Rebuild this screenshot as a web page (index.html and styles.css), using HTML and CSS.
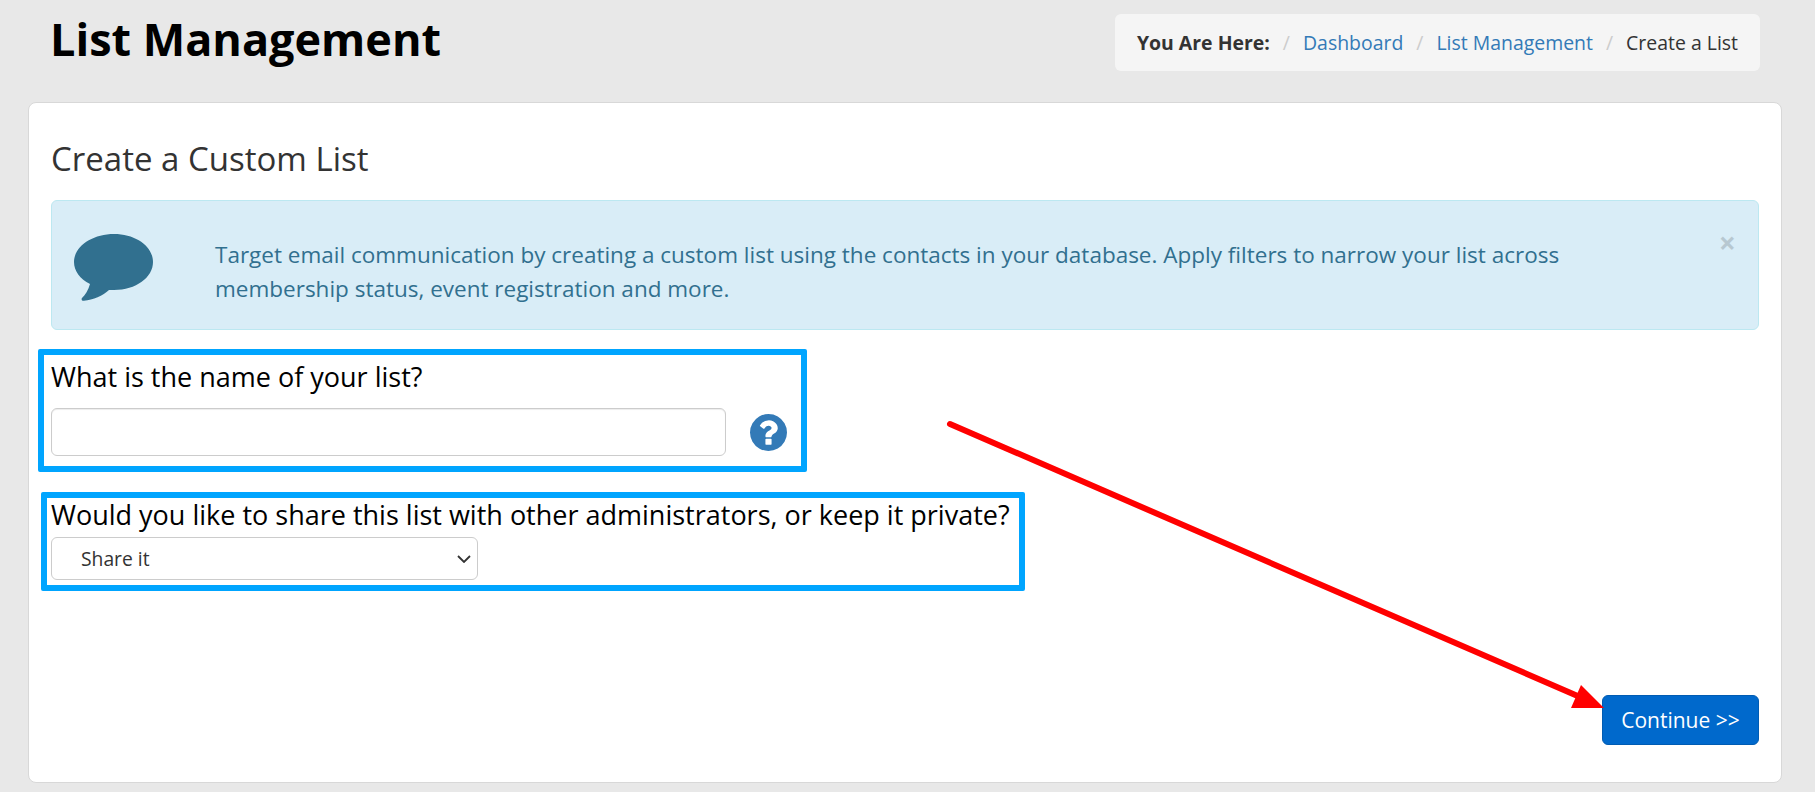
FILE: index.html
```html
<!DOCTYPE html>
<html lang="en">
<head>
    <meta charset="UTF-8">
    <title>List Management</title>
    <link rel="stylesheet" href="styles.css">
</head>
<body>
    <div class="page-head">
        <h1>List Management</h1>
        <ol class="breadcrumb">
            <li class="crumb-label">You Are Here:</li>
            <li><a href="#">Dashboard</a></li>
            <li><a href="#">List Management</a></li>
            <li>Create a List</li>
        </ol>
    </div>

    <div class="card">
        <h2>Create a Custom List</h2>

        <div class="alert">
            <svg class="alert-icon" viewBox="0 0 79 67" aria-hidden="true">
                <path d="M40 0C18 0 0 12.500 0 28c0 9 6 17 16 22-1.500 6-5 11-8 14-1 1.500 0 3 2 2.800 9-1 19-5 25-10.800 1.700.1 3.300 0 5 0 22 0 39-12.500 39-28S62 0 40 0z"/>
            </svg>
            <p>Target email communication by creating a custom list using the contacts in your database. Apply filters to narrow your list across membership status, event registration and more.</p>
            <span class="alert-close">×</span>
        </div>

        <div class="form-group name-group">
            <label for="listName">What is the name of your list?</label>
            <div class="input-row">
                <input type="text" id="listName">
                <svg class="help-icon" viewBox="128 128 1536 1536" aria-hidden="true">
                    <path d="M1024 1376v-192q0-14-9-23t-23-9h-192q-14 0-23 9t-9 23v192q0 14 9 23t23 9h192q14 0 23-9t9-23zm256-672q0-88-55.500-163t-138.500-116-170-41q-243 0-371 213-15 24 8 42l132 100q7 6 19 6 16 0 25-12 53-68 86-92 34-24 86-24 48 0 85.500 26t37.500 59q0 38-20 61t-68 45q-63 28-115.500 86.500t-52.500 125.500v36q0 14 9 23t23 9h192q14 0 23-9t9-23q0-19 21.500-49.500t54.500-49.500q32-18 49-28.500t46-35 44.500-48 28-60.500 12.500-81zm384 192q0 209-103 385.500t-279.500 279.500-385.500 103-385.500-103-279.500-279.500-103-385.500 103-385.500 279.500-279.500 385.500-103 385.500 103 279.500 279.500 103 385.500z"/>
                </svg>
            </div>
        </div>

        <div class="form-group share-group">
            <label for="listShare">Would you like to share this list with other administrators, or keep it private?</label>
            <select id="listShare">
                <option>Share it</option>
                <option>Keep it private</option>
            </select>
        </div>

        <div class="form-actions">
            <button type="button">Continue &gt;&gt;</button>
        </div>
    </div>

    <!-- annotations drawn on top of the screenshot -->
    <div class="mark mark-name"></div>
    <div class="mark mark-share"></div>
    <svg class="arrow" viewBox="0 0 1815 792" aria-hidden="true">
        <line x1="950" y1="424" x2="1580" y2="697" />
        <polygon points="1581,685 1571,708 1604,708" />
    </svg>
</body>
</html>
```

FILE: styles.css
```css
body {
    margin: 0;
    height: 792px;
    overflow: hidden;
    position: relative;
    background: #e8e8e8;
    font-family: "Open Sans", "Noto Sans", sans-serif;
    color: #333;
}

.page-head {
    display: flex;
    justify-content: space-between;
    align-items: flex-start;
    padding: 14px 55px 0 50px;
    height: 88px;
    box-sizing: border-box;
}

h1 {
    margin: 0;
    font-size: 45px;
    line-height: 50px;
    font-weight: 700;
    color: #000;
}

.breadcrumb {
    display: flex;
    list-style: none;
    margin: 0;
    padding: 0 22px;
    height: 57px;
    align-items: center;
    background: #f5f5f5;
    border-radius: 6px;
    font-size: 19.45px;
}

.breadcrumb li + li::before {
    content: "/";
    color: #ccc;
    padding: 0 13px;
}

.crumb-label {
    font-weight: 700;
}

.breadcrumb a {
    color: #337ab7;
    text-decoration: none;
}

.card {
    margin: 14px 33px 0 28px;
    height: 681px;
    box-sizing: border-box;
    padding: 33px 22px 0 22px;
    background: #fff;
    border: 1px solid #d8d8d8;
    border-radius: 8px;
}

h2 {
    margin: 0 0 18px;
    font-size: 33px;
    line-height: 46px;
    font-weight: 400;
}

.alert {
    position: relative;
    display: flex;
    align-items: center;
    height: 130px;
    box-sizing: border-box;
    padding: 0 195px 0 22px;
    background: #d9edf7;
    border: 1px solid #bce8f1;
    border-radius: 6px;
    color: #31708f;
}

.alert-icon {
    flex: none;
    width: 79px;
    height: 67px;
    margin: 4px 62px 0 0;
    fill: #31708f;
}

.alert p {
    margin: 14px 0 0;
    font-size: 22.5px;
    line-height: 34px;
}

.alert-close {
    position: absolute;
    top: 27px;
    right: 22px;
    font-size: 30px;
    line-height: 30px;
    font-weight: 700;
    color: #000;
    opacity: 0.15;
}

.form-group label {
    display: block;
    color: #000;
    font-size: 27px;
    line-height: 34px;
}

.name-group {
    padding-top: 30px;
}

.input-row {
    display: flex;
    align-items: center;
    margin-top: 14px;
}

input {
    width: 675px;
    height: 48px;
    box-sizing: border-box;
    border: 1px solid #ccc;
    border-radius: 6px;
    box-shadow: inset 0 1px 1px rgba(0, 0, 0, 0.075);
}

.help-icon {
    width: 37px;
    height: 37px;
    margin-left: 24px;
    fill: #337ab7;
}

.share-group {
    padding-top: 42px;
}

select {
    display: block;
    width: 427px;
    height: 43px;
    margin-top: 5px;
    padding-left: 29px;
    box-sizing: border-box;
    appearance: none;
    background: #fff url("data:image/svg+xml,%3Csvg xmlns='http://www.w3.org/2000/svg' width='14' height='8'%3E%3Cpath d='M1 1l6 6 6-6' fill='none' stroke='%23333' stroke-width='1.800'/%3E%3C/svg%3E") no-repeat right 6px center;
    border: 1px solid #ccc;
    border-radius: 6px;
    font-family: inherit;
    font-size: 19.3px;
    color: #333;
}

.form-actions {
    display: flex;
    justify-content: flex-end;
    margin-top: 115px;
}

button {
    width: 157px;
    height: 50px;
    background: #0069cc;
    color: #fff;
    border: 1px solid #005cb3;
    border-radius: 6px;
    font-family: inherit;
    font-size: 21px;
}

.mark {
    position: absolute;
    box-sizing: border-box;
    border: 6px solid #00a5ff;
    border-radius: 2px;
}

.mark-name {
    left: 38px;
    top: 349px;
    width: 769px;
    height: 123px;
}

.mark-share {
    left: 41px;
    top: 492px;
    width: 984px;
    height: 99px;
}

.arrow {
    position: absolute;
    left: 0;
    top: 0;
    width: 1815px;
    height: 792px;
    pointer-events: none;
}

.arrow line {
    stroke: #ff0000;
    stroke-width: 6;
    stroke-linecap: round;
}

.arrow polygon {
    fill: #ff0000;
}
```
